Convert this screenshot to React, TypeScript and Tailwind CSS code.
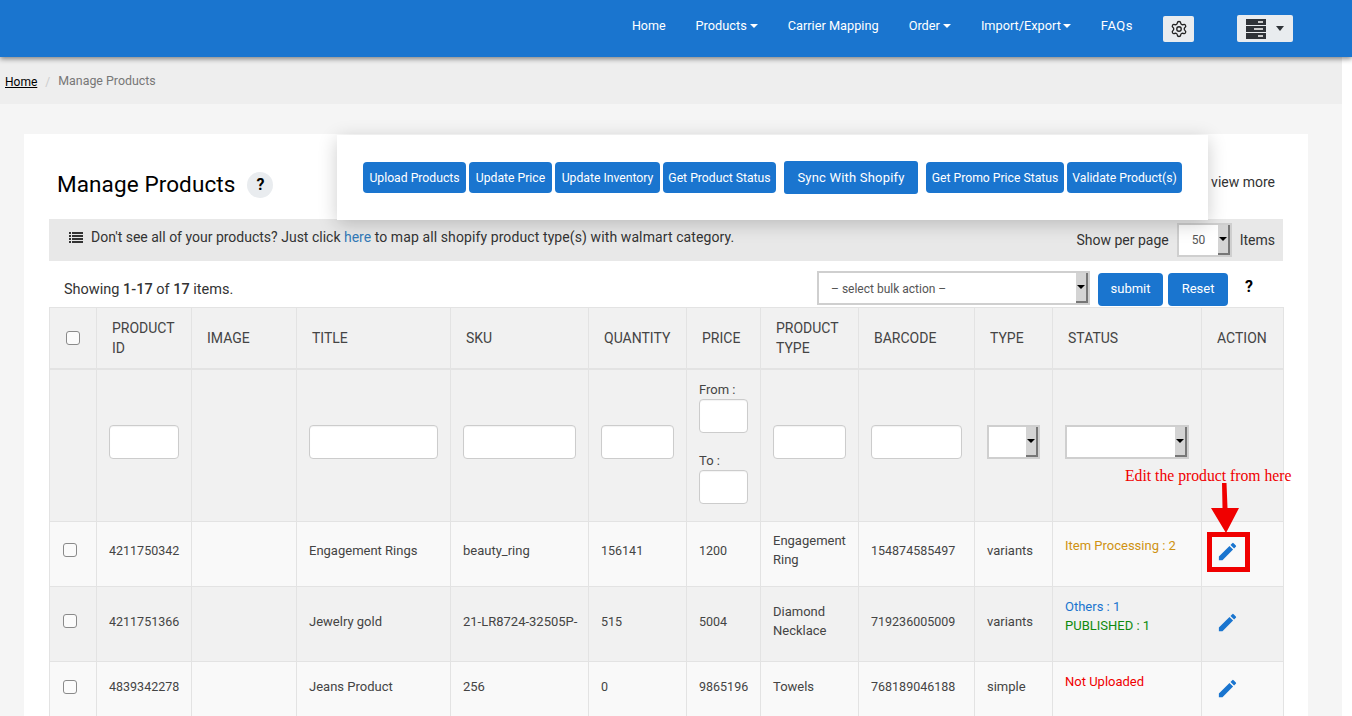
import { MdEdit } from "react-icons/md";
import { Settings } from "lucide-react";

const navItems = [
  { label: "Home", size: "text-[12.5px]", caretGap: "" },
  { label: "Products", size: "text-[12.75px]", caret: true, caretGap: "ml-[3px]" },
  { label: "Carrier Mapping", size: "text-[12.75px]", caretGap: "" },
  { label: "Order", size: "text-[12.75px]", caret: true, caretGap: "ml-[3px]" },
  { label: "Import/Export", size: "text-[12.75px]", caret: true, caretGap: "ml-[2px]" },
  { label: "FAQs", size: "text-[13px] tracking-[0.5px]", caretGap: "" },
];

const actions = [
  { label: "Upload Products", width: "w-[103px]" },
  { label: "Update Price", width: "w-[83px]" },
  { label: "Update Inventory", width: "w-[105px]" },
  { label: "Get Product Status", width: "w-[113px]" },
];
const actionsRight = [
  { label: "Get Promo Price Status", width: "w-[138px]" },
  { label: "Validate Product(s)", width: "w-[115px]" },
];

const rows = [
  {
    id: "4211750342",
    title: "Engagement Rings",
    sku: "beauty_ring",
    qty: "156141",
    price: "1200",
    type: ["Engagement", "Ring"],
    barcode: "154874585497",
    kind: "variants",
    height: "h-[65px]",
    pad: "pb-[8px]",
    bg: "bg-[#f9f9f9]",
    status: [{ text: "Item Processing : 2", color: "text-[#cf9212]" }],
  },
  {
    id: "4211751366",
    title: "Jewelry gold",
    sku: "21-LR8724-32505P-",
    qty: "515",
    price: "5004",
    type: ["Diamond", "Necklace"],
    barcode: "719236005009",
    kind: "variants",
    height: "h-[75px]",
    pad: "pb-[6px]",
    bg: "bg-[#f1f1f1]",
    status: [
      { text: "Others : 1", color: "text-[#1a75cf]" },
      { text: "PUBLISHED : 1", color: "text-[#0d8a0d]" },
    ],
  },
  {
    id: "4839342278",
    title: "Jeans Product",
    sku: "256",
    qty: "0",
    price: "9865196",
    type: ["Towels"],
    barcode: "768189046188",
    kind: "simple",
    height: "h-[60px]",
    pad: "pb-[10px]",
    bg: "bg-[#f9f9f9]",
    status: [{ text: "Not Uploaded", color: "text-[#f00000]" }],
  },
];

function Caret({ className }: { className: string }) {
  return <span className={`inline-block h-0 w-0 border-x-[4px] border-t-[4px] border-x-transparent ${className}`} />;
}

function FakeSelect({ className, label, labelClass }: { className: string; label?: string; labelClass?: string }) {
  return (
    <div className={`flex border-2 border-[#cfcfcf] bg-white ${className}`}>
      <span className={`flex flex-1 items-center truncate text-[12px] text-[#555] ${labelClass ?? ""}`}>{label}</span>
      <span className="flex w-[12px] shrink-0 items-center justify-center border-r-2 border-b-2 border-[#777] bg-[#d4d4d4]">
        <Caret className="border-x-[3px] border-t-[3px] border-t-black" />
      </span>
    </div>
  );
}

function TextBox({ className }: { className: string }) {
  return <div className={`h-[34px] rounded-[4px] border border-[#ccc] bg-white shadow-[inset_0_1px_1px_rgba(0,0,0,0.05)] ${className}`} />;
}

function Checkbox({ className }: { className: string }) {
  return <span className={`block h-[14px] w-[14px] rounded-[3px] border border-[#8a8a8a] bg-[#fbfbfb] ${className}`} />;
}

function ServerIcon() {
  return (
    <svg width="20" height="20" viewBox="0 0 20 20">
      <rect x="0" y="0" width="20" height="6" fill="#2f3338" />
      <rect x="0" y="7" width="20" height="6" fill="#2f3338" />
      <rect x="0" y="14" width="20" height="6" fill="#2f3338" />
      <rect x="12" y="2" width="5" height="2" fill="#ccc" />
      <rect x="8" y="9" width="9" height="2" fill="#ccc" />
      <rect x="12" y="16" width="5" height="2" fill="#ccc" />
    </svg>
  );
}

function ListIcon() {
  return (
    <svg width="14" height="11" viewBox="0 0 14 11" className="mr-[8px] mb-[6px] shrink-0">
      {[0, 3, 6, 9].map((y) => (
        <g key={y} fill="#333">
          <rect x="0" y={y} width="2" height="2" />
          <rect x="3" y={y} width="11" height="2" />
        </g>
      ))}
    </svg>
  );
}

export default function App() {
  const th = "border border-[#e3e3e3] px-[15px] py-2 text-left text-[14px] font-normal leading-[20px] text-[#444]";
  const cell = "border border-[#e3e3e3] px-3 align-middle leading-[19px] text-[#444]";
  const td = `${cell} text-[13px]`;
  const num = `${cell} text-[12.5px]`;
  const filterTd = `${td} pb-[7px]`;
  const btn = "flex h-[31px] items-center justify-center rounded-[4px] bg-[#1a75cf] pt-[1px] text-[12.2px] text-white";

  return (
    <div className="relative h-[716px] w-[1352px] overflow-hidden bg-white font-['Roboto',sans-serif]">
      <header className="relative z-10 flex h-[57px] items-center justify-end bg-[#1a75cf] pr-[59px] shadow-[0_2px_5px_rgba(0,0,0,0.45)]">
        <nav className="flex items-center gap-[30px] pb-[5px] text-white">
          {navItems.map((item) => (
            <span key={item.label} className={`flex items-center ${item.size}`}>
              {item.label}
              {item.caret && <Caret className={`${item.caretGap} border-t-white`} />}
            </span>
          ))}
        </nav>
        <span className="ml-[30px] flex h-[26px] w-[31px] items-center justify-center rounded-[2px] bg-[#e9ecef]">
          <Settings size={18} strokeWidth={1.75} className="text-[#222]" />
        </span>
        <span className="ml-[43px] flex h-[27px] w-[56px] items-center gap-[10px] rounded-[2px] bg-[#e9ecef] pl-[9px]">
          <ServerIcon />
          <Caret className="border-x-[4px] border-t-[5px] border-t-[#2f3338]" />
        </span>
      </header>

      <div className="w-[1342px] bg-[#f5f5f5]">
        <div className="flex h-[47px] items-center bg-[#eeeeee] pt-[2px] pl-[5px]">
          <span className="text-[12px] text-black underline">Home</span>
          <span className="mx-[8px] text-[12px] text-[#ccc]">/</span>
          <span className="text-[12.4px] text-[#777]">Manage Products</span>
        </div>

        <div className="px-[24px] pt-[30px] pb-[20px]">
          <main className="relative h-[600px] w-[1284px] bg-white px-[25px]">
            <div className="flex h-[85px] items-center pt-[16px] pl-[8px]">
              <h1 className="text-[22.5px] font-normal tracking-[0.1px] text-black">Manage Products</h1>
              <span className="ml-[12px] flex h-[26px] w-[26px] items-center justify-center rounded-full bg-[#e9ecef] text-[16px] font-bold text-black">?</span>
              <span className="ml-auto pr-[8px] pb-[4px] text-[14px] text-[#333]">view more</span>
            </div>

            <div className="flex h-[42px] items-center bg-[#e8e8e8] pr-[8px] pl-[20px] text-[14px] text-[#333]">
              <ListIcon />
              <span className="pb-[6px]">
                Don't see all of your products? Just click <span className="text-[#337ab7]">here</span>{" "}
                <span className="tracking-[0.1px]">to map all shopify product type(s) with walmart category.</span>
              </span>
              <span className="ml-auto">Show per page</span>
              <FakeSelect className="mr-[8px] ml-[8px] h-[34px] w-[55px]" label="50" labelClass="pl-[13px]" />
              <span>Items</span>
            </div>

            <div className="flex h-[46px] items-center pt-[10px] pl-[15px] text-[14.5px] text-[#333]">
              <span className="pt-[2px]">
                Showing <b className="font-medium">1-17</b> of <b className="font-medium">17</b> items.
              </span>
              <FakeSelect className="ml-auto -mt-[2px] h-[34px] w-[273px]" label="– select bulk action –" labelClass="pt-[1px] pl-[12px]" />
              <span className="ml-[8px] flex h-[33px] w-[65px] items-center justify-center rounded-[4px] bg-[#1a75cf] text-[13px] text-white">submit</span>
              <span className="ml-[5px] flex h-[33px] w-[60px] items-center justify-center rounded-[4px] bg-[#1a75cf] text-[13px] text-white">Reset</span>
              <span className="mr-[30px] ml-[17px] pb-[4px] text-[16px] font-bold text-black">?</span>
            </div>

            <table className="w-[1234px] table-fixed border-collapse">
              <colgroup>
                <col className="w-[47px]" />
                <col className="w-[95px]" />
                <col className="w-[105px]" />
                <col className="w-[154px]" />
                <col className="w-[138px]" />
                <col className="w-[98px]" />
                <col className="w-[74px]" />
                <col className="w-[98px]" />
                <col className="w-[116px]" />
                <col className="w-[78px]" />
                <col className="w-[149px]" />
                <col className="w-[82px]" />
              </colgroup>
              <thead>
                <tr className="h-[61px] border-b-2 border-b-[#e3e3e3] bg-[#f1f1f1]">
                  <th className={th}>
                    <Checkbox className="ml-[1px]" />
                  </th>
                  <th className={th}>PRODUCT ID</th>
                  <th className={th}>IMAGE</th>
                  <th className={th}>TITLE</th>
                  <th className={th}>SKU</th>
                  <th className={th}>QUANTITY</th>
                  <th className={th}>PRICE</th>
                  <th className={th}>PRODUCT TYPE</th>
                  <th className={th}>BARCODE</th>
                  <th className={th}>TYPE</th>
                  <th className={th}>STATUS</th>
                  <th className={th}>ACTION</th>
                </tr>
              </thead>
              <tbody>
                <tr className="h-[153px] bg-[#f1f1f1]">
                  <td className={filterTd} />
                  <td className={filterTd}>
                    <TextBox className="w-[70px]" />
                  </td>
                  <td className={filterTd} />
                  <td className={filterTd}>
                    <TextBox className="w-[129px]" />
                  </td>
                  <td className={filterTd}>
                    <TextBox className="w-[113px]" />
                  </td>
                  <td className={filterTd}>
                    <TextBox className="w-[73px]" />
                  </td>
                  <td className={filterTd}>
                    <div className="leading-[19px]">From :</div>
                    <TextBox className="w-[49px]" />
                    <div className="mt-[18px] leading-[19px]">To :</div>
                    <TextBox className="w-[49px]" />
                  </td>
                  <td className={filterTd}>
                    <TextBox className="w-[73px]" />
                  </td>
                  <td className={filterTd}>
                    <TextBox className="w-[91px]" />
                  </td>
                  <td className={filterTd}>
                    <FakeSelect className="h-[34px] w-[53px]" />
                  </td>
                  <td className={filterTd}>
                    <FakeSelect className="h-[34px] w-[124px]" />
                  </td>
                  <td className={filterTd} />
                </tr>
                {rows.map((row) => (
                  <tr key={row.id} className={`${row.height} ${row.bg}`}>
                    <td className={`${td} ${row.pad}`}>
                      <Checkbox className="ml-[1px]" />
                    </td>
                    <td className={`${num} ${row.pad}`}>{row.id}</td>
                    <td className={td} />
                    <td className={`${td} ${row.pad}`}>{row.title}</td>
                    <td className={`${td} ${row.pad} whitespace-nowrap`}>{row.sku}</td>
                    <td className={`${num} ${row.pad}`}>{row.qty}</td>
                    <td className={`${num} ${row.pad}`}>{row.price}</td>
                    <td className={`${td} ${row.pad}`}>
                      {row.type.map((t) => (
                        <div key={t}>{t}</div>
                      ))}
                    </td>
                    <td className={`${num} ${row.pad}`}>{row.barcode}</td>
                    <td className={`${td} ${row.pad}`}>{row.kind}</td>
                    <td className={`${td} ${row.pad}`}>
                      <div className="pb-[10px]">
                        {row.status.map((s) => (
                          <div key={s.text} className={s.color}>
                            {s.text}
                          </div>
                        ))}
                      </div>
                    </td>
                    <td className={`${td} ${row.pad}`}>
                      <MdEdit className="mt-[3px] ml-[2px] h-[23px] w-[23px] text-[#1a75cf]" />
                    </td>
                  </tr>
                ))}
              </tbody>
            </table>

            <div className="absolute top-[1px] left-[313px] flex h-[85px] w-[871px] items-center bg-white pl-[26px] shadow-[0_4px_18px_rgba(0,0,0,0.2)]">
              <div className="flex gap-[3px]">
                {actions.map((a) => (
                  <span key={a.label} className={`${btn} ${a.width}`}>
                    {a.label}
                  </span>
                ))}
              </div>
              <span className="mx-[8px] flex h-[33px] w-[134px] items-center justify-center rounded-[3px] bg-[#1a75cf] text-[13px] tracking-[0.2px] text-white">Sync With Shopify</span>
              <div className="flex gap-[3px]">
                {actionsRight.map((a) => (
                  <span key={a.label} className={`${btn} ${a.width}`}>
                    {a.label}
                  </span>
                ))}
              </div>
            </div>

            <span className="absolute top-[330px] left-[1101px] font-['Liberation_Serif',serif] text-[15.7px] whitespace-nowrap text-[#f00000]">Edit the product from here</span>
            <div className="absolute top-[398px] left-[1183px] h-[40px] w-[43px] border-[5px] border-[#f00000]" />
            <svg className="absolute top-[349px] left-[1180px]" width="40" height="52" viewBox="0 0 40 52">
              <path d="M18 0 L22.5 0 L23.5 25 L35 25 L22 50 L7 25 L18.5 25 Z" fill="#f00000" />
            </svg>
          </main>
        </div>
      </div>
    </div>
  );
}
